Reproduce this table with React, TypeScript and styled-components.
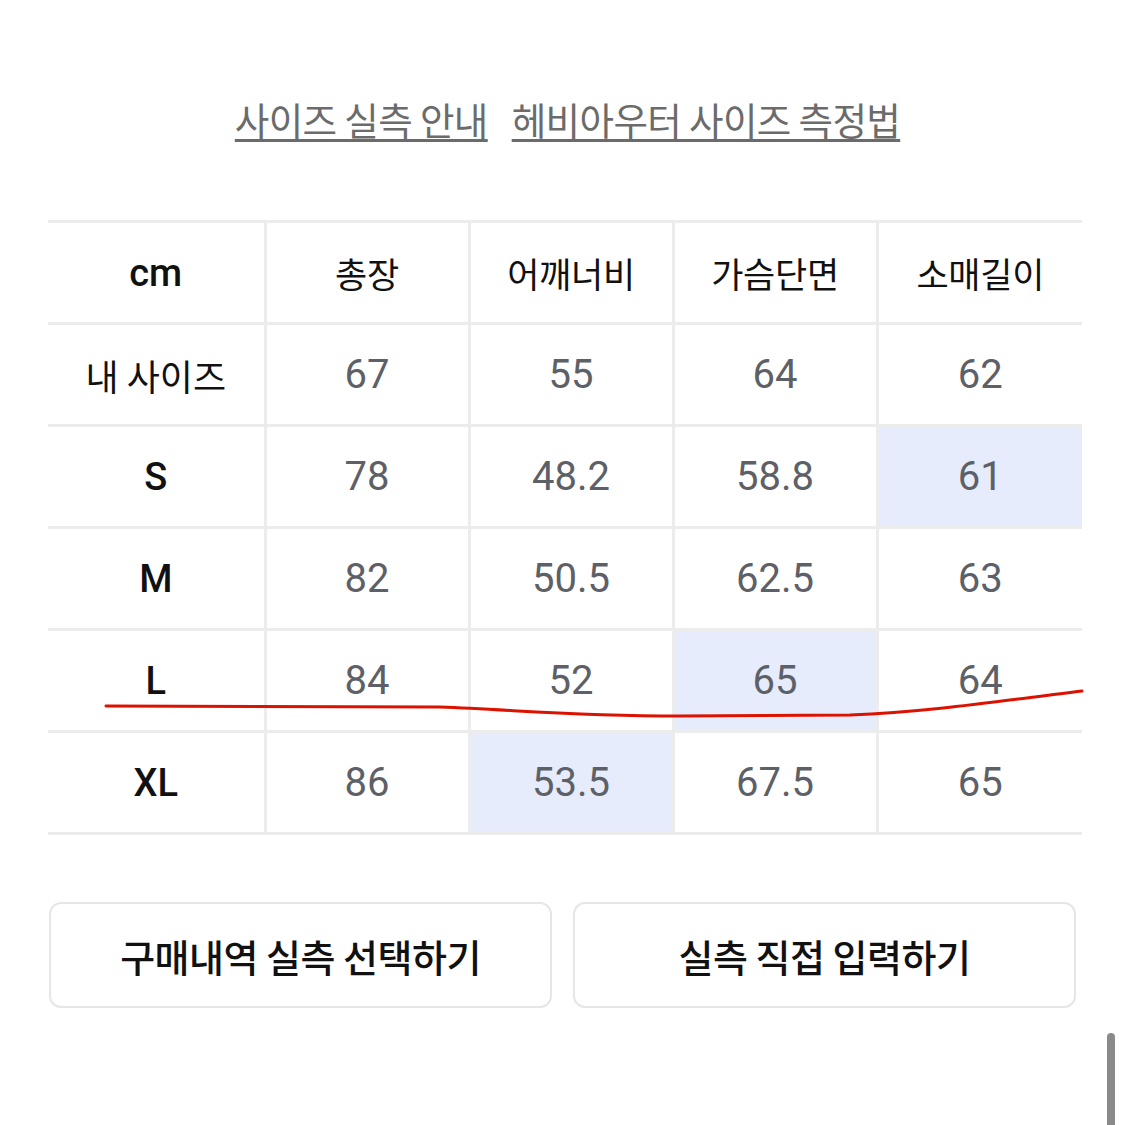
import React from "react";
import styled, { createGlobalStyle } from "styled-components";

const Global = createGlobalStyle`
  html, body { margin: 0; padding: 0; background: #fff; }
  body { font-family: "Noto Sans CJK KR", "Noto Sans", sans-serif; }
`;

const Page = styled.div`
  width: 1125px;
  height: 1125px;
  position: relative;
  overflow: hidden;
  background: #fff;
  padding: 92px 43px 0 48px;
  box-sizing: border-box;
`;

const LinkRow = styled.div`
  display: flex;
  justify-content: center;
  gap: 24px;
  margin-right: -5px;
`;

const GuideLink = styled.a`
  font-family: "Noto Sans CJK KR", sans-serif;
  font-size: 37.5px;
  line-height: 54px;
  color: #6b6b6b;
  text-decoration: underline;
  text-decoration-thickness: 3px;
  text-underline-offset: 4px;
  letter-spacing: -0.6px;
  cursor: pointer;
`;

const TableWrap = styled.div`
  position: relative;
  margin-top: 74px;
`;

const Table = styled.table`
  width: 1034px;
  table-layout: fixed;
  border-collapse: collapse;
`;

const Row = styled.tr`
  border-top: 3px solid #ececec;
  border-bottom: 3px solid #ececec;
`;

const Cell = styled.td<{ $hl?: boolean }>`
  height: 99px;
  padding: 0;
  text-align: center;
  vertical-align: middle;
  background: ${(p) => (p.$hl ? "#e6ecfb" : "#fff")};
  border-left: 3px solid #ececec;
  font-family: Roboto, "Noto Sans", sans-serif;
  font-size: 40px;
  color: #5d6067;
  &:first-child { border-left: none; }
  &:last-child { border-right: none; }
`;

const HeadCell = styled(Cell)`
  font-family: "Noto Sans CJK KR", sans-serif;
  font-size: 35px;
  color: #111;
  letter-spacing: -0.3px;
`;

const LabelCell = styled(Cell)<{ $latin?: boolean }>`
  font-family: ${(p) =>
    p.$latin ? 'Roboto, "Noto Sans", sans-serif' : '"Noto Sans CJK KR", sans-serif'};
  font-size: ${(p) => (p.$latin ? "38px" : "36px")};
  font-weight: ${(p) => (p.$latin ? 500 : 400)};
  color: #111;
`;

const Mark = styled.svg`
  position: absolute;
  left: -48px;
  top: -221px;
  width: 1125px;
  height: 1125px;
  pointer-events: none;
`;

const ButtonRow = styled.div`
  display: flex;
  gap: 21px;
  margin-top: 67px;
  padding-left: 1px;
  width: 1027px;
`;

const ActionButton = styled.button`
  flex: 1;
  height: 106px;
  background: #fff;
  border: 2px solid #e6e6e6;
  border-radius: 12px;
  font-family: "Noto Sans CJK KR", sans-serif;
  font-size: 38px;
  font-weight: 500;
  color: #111;
  letter-spacing: -0.5px;
  cursor: pointer;
`;

const Scrollbar = styled.div`
  position: absolute;
  right: 10px;
  top: 1033px;
  width: 8px;
  height: 110px;
  border-radius: 4px;
  background: #8a8a8a;
`;

const headers = ["총장", "어깨너비", "가슴단면", "소매길이"];

type R = { label: string; latin: boolean; values: string[]; hl?: number };

const rows: R[] = [
  { label: "내 사이즈", latin: false, values: ["67", "55", "64", "62"] },
  { label: "S", latin: true, values: ["78", "48.2", "58.8", "61"], hl: 3 },
  { label: "M", latin: true, values: ["82", "50.5", "62.5", "63"] },
  { label: "L", latin: true, values: ["84", "52", "65", "64"], hl: 2 },
  { label: "XL", latin: true, values: ["86", "53.5", "67.5", "65"], hl: 1 },
];

export default function App() {
  return (
    <Page>
      <Global />
      <LinkRow>
        <GuideLink>사이즈 실측 안내</GuideLink>
        <GuideLink>헤비아우터 사이즈 측정법</GuideLink>
      </LinkRow>
      <TableWrap>
        <Table>
          <colgroup>
            <col style={{ width: 217 }} />
            <col style={{ width: 204 }} />
            <col style={{ width: 204 }} />
            <col style={{ width: 204 }} />
            <col style={{ width: 205 }} />
          </colgroup>
          <tbody>
            <Row>
              <LabelCell $latin>cm</LabelCell>
              {headers.map((h) => (
                <HeadCell key={h}>{h}</HeadCell>
              ))}
            </Row>
            {rows.map((r) => (
              <Row key={r.label}>
                <LabelCell $latin={r.latin}>{r.label}</LabelCell>
                {r.values.map((v, i) => (
                  <Cell key={i} $hl={r.hl === i}>
                    {v}
                  </Cell>
                ))}
              </Row>
            ))}
          </tbody>
        </Table>
        <Mark viewBox="0 0 1125 1125">
          <path
            d="M106 707 L 440 708 C 520 711, 570 717, 680 717 L 850 716 C 930 713, 1000 702, 1082 692"
            fill="none"
            stroke="#dd1100"
            strokeWidth="3"
            strokeLinecap="round"
          />
        </Mark>
      </TableWrap>
      <ButtonRow>
        <ActionButton>구매내역 실측 선택하기</ActionButton>
        <ActionButton>실측 직접 입력하기</ActionButton>
      </ButtonRow>
      <Scrollbar />
    </Page>
  );
}
